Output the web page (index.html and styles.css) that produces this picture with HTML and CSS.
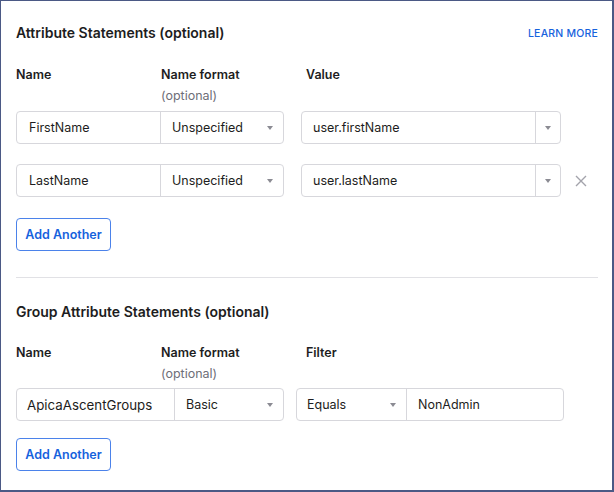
FILE: index.html
```html
<!DOCTYPE html>
<html>
<head>
<meta charset="utf-8">
<link rel="stylesheet" href="styles.css">
</head>
<body>
<div class="frame">
  <section class="section first">
    <div class="head">
      <h2 class="title">Attribute Statements (optional)</h2>
      <a class="learn">LEARN MORE</a>
    </div>
    <div class="labels">
      <div class="lab">Name</div>
      <div class="lab">Name format<div class="opt">(optional)</div></div>
      <div class="lab">Value</div>
    </div>
    <div class="row">
      <div class="pair">
        <div class="txt w-name">FirstName</div>
        <div class="sel w-fmt"><span>Unspecified</span><i class="tri"></i></div>
      </div>
      <div class="combo">
        <div class="ctext">user.firstName</div>
        <div class="carrow"><i class="tri"></i></div>
      </div>
    </div>
    <div class="row">
      <div class="pair">
        <div class="txt w-name">LastName</div>
        <div class="sel w-fmt"><span>Unspecified</span><i class="tri"></i></div>
      </div>
      <div class="combo">
        <div class="ctext">user.lastName</div>
        <div class="carrow"><i class="tri"></i></div>
      </div>
      <svg class="close" width="12" height="12" viewBox="0 0 12 12"><path d="M1 1 L11 11 M11 1 L1 11" stroke="#a3a3ab" stroke-width="1.4" fill="none"/></svg>
    </div>
    <button class="add">Add Another</button>
  </section>
  <hr class="sep">
  <section class="section second">
    <div class="head">
      <h2 class="title">Group Attribute Statements (optional)</h2>
    </div>
    <div class="labels">
      <div class="lab">Name</div>
      <div class="lab">Name format<div class="opt">(optional)</div></div>
      <div class="lab">Filter</div>
    </div>
    <div class="row">
      <div class="pair">
        <div class="txt w-gname big">ApicaAscentGroups</div>
        <div class="sel w-gfmt"><span>Basic</span><i class="tri"></i></div>
      </div>
      <div class="pair filter">
        <div class="sel w-filter"><span>Equals</span><i class="tri"></i></div>
        <div class="txt w-fval">NonAdmin</div>
      </div>
    </div>
    <button class="add">Add Another</button>
  </section>
</div>
</body>
</html>
```
FILE: styles.css
```css
* { box-sizing: border-box; }
html, body { margin: 0; padding: 0; background: #fff; }
body { font-family: Inter, "Noto Sans", sans-serif; color: #1d1d21; }

.frame {
  width: 614px;
  height: 492px;
  border-style: solid;
  border-color: #4b5985;
  border-width: 1px 2px 2px 1px;
  padding: 0 14px 0 15px;
}

.section.first { padding-top: 22px; }
.head { display: flex; justify-content: space-between; align-items: center; height: 20px; }
.title { margin: 0; font-size: 14px; font-weight: 600; line-height: 20px; letter-spacing: 0; }
.learn { font-size: 10.5px; font-weight: 500; color: #1662dd; letter-spacing: 0.2px; }

.labels { display: grid; grid-template-columns: 145px 145px 1fr; margin-top: 23px; }
.lab { font-size: 12.5px; font-weight: 600; line-height: 18px; }
.opt { font-size: 12.5px; font-weight: 400; color: #6e6e78; line-height: 20px; margin-top: 2px; }

.row { display: flex; align-items: center; height: 33px; margin-top: 5px; }
.row + .row { margin-top: 20px; }

.pair { display: flex; height: 33px; border: 1px solid #d7d7dc; border-radius: 4px; }
.txt, .sel { height: 100%; display: flex; align-items: center; font-size: 12.5px; }
.txt { padding-left: 12px; }
.sel { border-left: 1px solid #d7d7dc; padding: 0 10px 0 11px; justify-content: space-between; }
.w-name { width: 143px; }
.w-fmt { width: 123px; }
.w-gname { width: 157px; padding-left: 10px; }
.w-gfmt { width: 109px; }
.big { font-size: 13.3px; }

.filter { margin-left: 12px; }
.w-filter { width: 109px; border-left: none; padding-left: 10px; }
.w-fval { width: 157px; border-left: 1px solid #d7d7dc; padding-left: 11px; }

.tri { display: block; width: 0; height: 0; border-left: 3.5px solid transparent; border-right: 3.5px solid transparent; border-top: 4px solid #8b8b93; }

.combo { display: flex; height: 33px; margin-left: 17px; width: 260px; border: 1px solid #d7d7dc; border-radius: 4px; }
.ctext { flex: 1; display: flex; align-items: center; padding-left: 11px; font-size: 12.5px; }
.carrow { width: 25px; border-left: 1px solid #d7d7dc; display: flex; align-items: center; justify-content: center; }
.close { margin-left: 14px; }

.add {
  display: block;
  margin-top: 21px;
  height: 33px;
  width: 95px;
  padding: 0;
  background: #fff;
  border: 1px solid #4b82ea;
  border-radius: 4px;
  color: #1662dd;
  font-family: inherit;
  font-size: 12.5px;
  font-weight: 600;
}

.sep { margin: 26px 0 0 0; border: none; border-top: 1px solid #e1e1e5; height: 0; width: 582px; }
.section.second { padding-top: 24px; }
.second .labels { margin-top: 22px; }
.second .row { margin-top: 4px; }
.second .add { margin-top: 17px; }
```
